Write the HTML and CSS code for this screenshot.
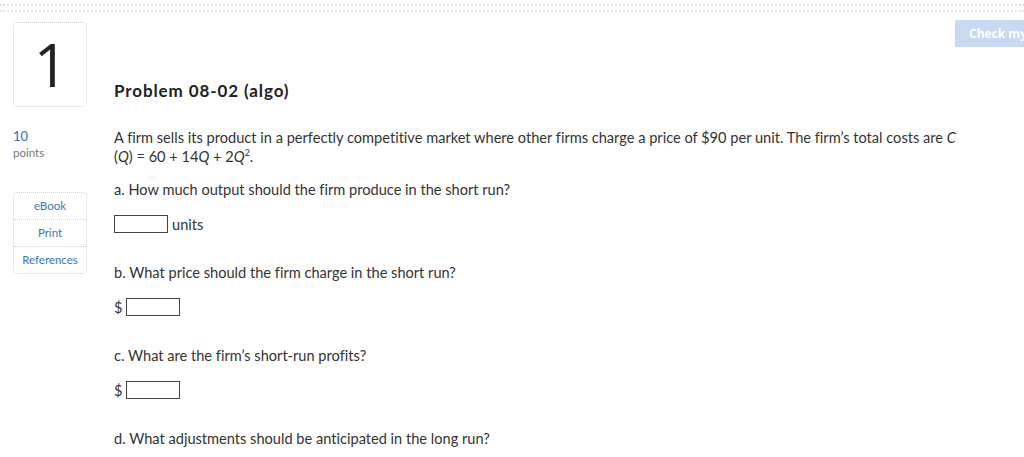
FILE: index.html
```html
<!DOCTYPE html>
<html>
<head>
<meta charset="utf-8">
<link rel="stylesheet" href="styles.css">
</head>
<body>
<div class="topband"></div>
<button class="check">Check my work</button>
<div class="layout">
  <div class="numbox">1</div>
  <h1 class="title">Problem 08-02 (algo)</h1>
  <aside class="side">
    <div class="pts"><span class="pts-num">10</span><span class="pts-label">points</span></div>
    <nav class="tools">
      <a class="tool">eBook</a>
      <a class="tool">Print</a>
      <a class="tool">References</a>
    </nav>
  </aside>
  <main class="content">
    <p class="q intro">A firm sells its product in a perfectly competitive market where other firms charge a price of $90 per unit. The firm’s total costs are <i>C</i><br>(<i>Q</i>) = 60 + 14<i>Q</i> + 2<i>Q</i><sup>2</sup>.</p>
    <p class="q">a. How much output should the firm produce in the short run?</p>
    <div class="ans"><span class="box"></span><span class="unit">units</span></div>
    <p class="q">b. What price should the firm charge in the short run?</p>
    <div class="ans"><span class="cur">$</span><span class="box"></span></div>
    <p class="q">c. What are the firm’s short-run profits?</p>
    <div class="ans"><span class="cur">$</span><span class="box"></span></div>
    <p class="q">d. What adjustments should be anticipated in the long run?</p>
  </main>
</div>
</body>
</html>
```
FILE: styles.css
```css
html, body {
  margin: 0;
  padding: 0;
  background: #fff;
  overflow: hidden;
}
body {
  font-family: Lato, "Open Sans", sans-serif;
  font-variant-ligatures: none;
  color: #333;
  width: 1024px;
  height: 457px;
  position: relative;
}
.topband {
  margin-top: 4px;
  height: 4px;
  border-top: 2px dotted #e6e2e8;
  border-bottom: 2px dotted #e2eae2;
}
.check {
  position: absolute;
  top: 20px;
  left: 955px;
  width: 110px;
  height: 27px;
  border: none;
  background: #c8d9f1;
  color: #fff;
  font-family: "Open Sans", sans-serif;
  font-weight: 700;
  font-size: 12px;
  text-align: left;
  padding: 0 0 0 14px;
  white-space: nowrap;
}
.layout {
  display: grid;
  grid-template-columns: 74px 1fr;
  column-gap: 27px;
  padding: 10px 0 0 13px;
}
.numbox {
  width: 72px;
  height: 83px;
  border: 1px dotted #cfcfcf;
  border-radius: 5px;
  font-size: 60px;
  line-height: 83px;
  text-align: center;
  color: #222;
  font-family: "Open Sans", sans-serif;
  padding-left: 2px;
  box-sizing: content-box;
  width: 70px;
}
.title {
  align-self: end;
  margin: 0 0 6px;
  font-size: 17px;
  line-height: 20px;
  letter-spacing: 0.9px;
  font-weight: 700;
  color: #222;
}
.side {
  padding-top: 21px;
}
.pts {
  display: flex;
  flex-direction: column;
}
.pts-num {
  color: #2f6db5;
  font-size: 13px;
  line-height: 17px;
}
.pts-label {
  color: #777;
  font-size: 11.5px;
  line-height: 16px;
}
.tools {
  margin-top: 31px;
  display: flex;
  flex-direction: column;
  border: 1px dotted #d4d4d4;
  border-radius: 4px;
}
.tool {
  height: 26px;
  line-height: 26px;
  text-align: center;
  font-size: 11.5px;
  color: #3b73b9;
}
.tool + .tool {
  border-top: 1px dotted #d4d4d4;
}
.content {
  padding-top: 21px;
}
.q {
  margin: 0;
  font-size: 14.6px;
  line-height: 19px;
  color: #333;
}
.q i { font-style: italic; }
.q sup { font-size: 9px; line-height: 0; }
.intro { margin-bottom: 14px; }
.ans {
  display: flex;
  align-items: center;
  gap: 4px;
  margin: 16px 0 30px;
  height: 18px;
  font-size: 14.6px;
}
.box {
  width: 52px;
  height: 16px;
  border: 1px solid #444;
  background: #fff;
}
.cur { width: 8px; }
```
